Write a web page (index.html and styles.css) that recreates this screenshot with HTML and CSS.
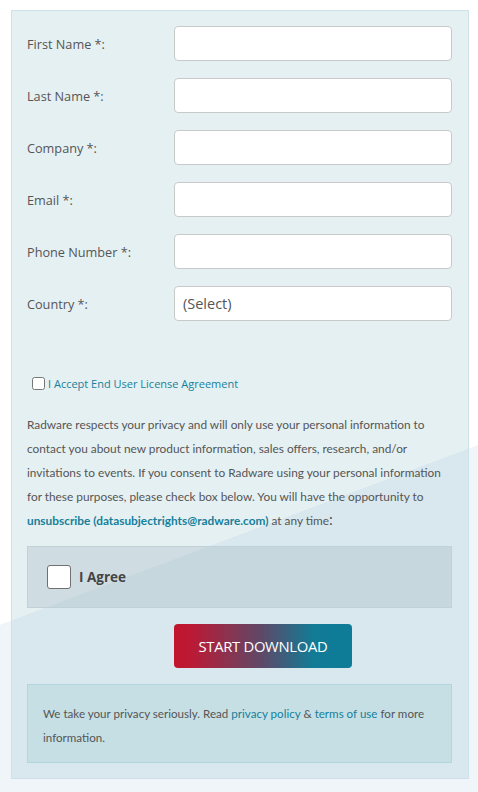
FILE: index.html
```html
<!DOCTYPE html>
<html lang="en">
<head>
<meta charset="utf-8">
<title>Download Form</title>
<link rel="stylesheet" href="styles.css">
</head>
<body>
<div class="page">
  <form class="panel">
    <div class="fields">
      <label class="label" for="fn">First Name *:</label>
      <input class="input" id="fn" type="text">
      <label class="label" for="ln">Last Name *:</label>
      <input class="input" id="ln" type="text">
      <label class="label" for="co">Company *:</label>
      <input class="input" id="co" type="text">
      <label class="label" for="em">Email *:</label>
      <input class="input" id="em" type="text">
      <label class="label" for="ph">Phone Number *:</label>
      <input class="input" id="ph" type="text">
      <label class="label" for="ct">Country *:</label>
      <select class="input select" id="ct"><option>(Select)</option></select>
    </div>

    <div class="eula">
      <input class="eula-check" type="checkbox" id="eula">
      <a class="eula-link" href="#">I Accept End User License Agreement</a>
    </div>

    <p class="consent">Radware respects your privacy and will only use your personal information to contact you about new product information, sales offers, research, and/or invitations to events. If you consent to Radware using your personal information for these purposes, please check box below. You will have the opportunity to <a class="strong-link" href="#">unsubscribe (datasubjectrights@radware.com)</a> at any time<span class="colon">:</span></p>

    <div class="agree">
      <span class="agree-box"></span>
      <span class="agree-text">I Agree</span>
    </div>

    <div class="actions">
      <button class="btn" type="button">START DOWNLOAD</button>
    </div>

    <div class="note">We take your privacy seriously. Read <a class="link" href="#">privacy policy</a> &amp; <a class="link" href="#">terms of use</a> for more information.</div>
  </form>
</div>
</body>
</html>
```
FILE: styles.css
```css
html {
  height: 100%;
}
body {
  margin: 0;
  min-height: 100%;
  background: linear-gradient(159.4deg, #ffffff 64.3%, #eff5f8 64.3%);
  font-family: "Open Sans", "Liberation Sans", sans-serif;
  color: #555;
}
.page {
  padding: 10px 9px 0 11px;
}
.panel {
  display: block;
  border: 1px solid #cde2e8;
  background: rgba(152, 196, 208, 0.25);
  padding: 15px 16px 15px 15px;
}
.fields {
  display: grid;
  grid-template-columns: 147px 278px;
  row-gap: 17px;
  align-items: center;
}
.label {
  font-size: 12.7px;
  color: #555;
}
.input {
  box-sizing: border-box;
  height: 35px;
  width: 278px;
  margin: 0;
  border: 1px solid #c9c9c9;
  border-radius: 4px;
  background: #fff;
  font-family: "Open Sans", sans-serif;
}
.select {
  appearance: none;
  -webkit-appearance: none;
  font-size: 14.5px;
  color: #555;
  padding: 0 8px;
}
.eula {
  display: flex;
  align-items: center;
  margin-top: 54px;
  height: 16px;
  padding-left: 4px;
}
.eula-check {
  margin: 0 3px 0 1px;
  width: 13px;
  height: 13px;
}
.eula-link {
  font-size: 11px;
  color: #17809b;
  text-decoration: none;
}
.consent {
  margin: 22px 0 0;
  font-family: "Lato", sans-serif;
  font-size: 11.85px;
  line-height: 24px;
  color: #555;
}
.strong-link {
  color: #177f9a;
  font-weight: bold;
  text-decoration: none;
}
.colon {
  font-size: 15px;
  line-height: 0;
}
.agree {
  display: flex;
  align-items: center;
  margin-top: 13px;
  height: 60px;
  border: 1px solid #c0d2d8;
  background: rgba(110, 140, 150, 0.18);
  padding-left: 19px;
}
.agree-box {
  box-sizing: border-box;
  width: 24px;
  height: 24px;
  border: 1px solid #707070;
  border-radius: 3px;
  background: #fff;
}
.agree-text {
  margin-left: 8px;
  font-size: 13.5px;
  font-weight: bold;
  color: #444;
}
.actions {
  margin-top: 16px;
  padding-left: 147px;
}
.btn {
  display: block;
  width: 178px;
  height: 44px;
  border: 0;
  border-radius: 4px;
  background: linear-gradient(90deg, #c2132d 0%, #bb1a35 10%, #5c4a69 50%, #127b96 78%, #0e7c98 100%);
  color: #fff;
  font-family: "Open Sans", sans-serif;
  font-size: 14.8px;
  letter-spacing: -0.3px;
  padding: 0;
}
.note {
  margin-top: 16px;
  border: 1px solid #b3d5df;
  background: #c5dfe5;
  padding: 17px 15px 12px;
  font-family: "Lato", sans-serif;
  font-size: 11.6px;
  line-height: 24px;
  color: #555;
}
.link {
  color: #17809b;
  text-decoration: none;
}
```
